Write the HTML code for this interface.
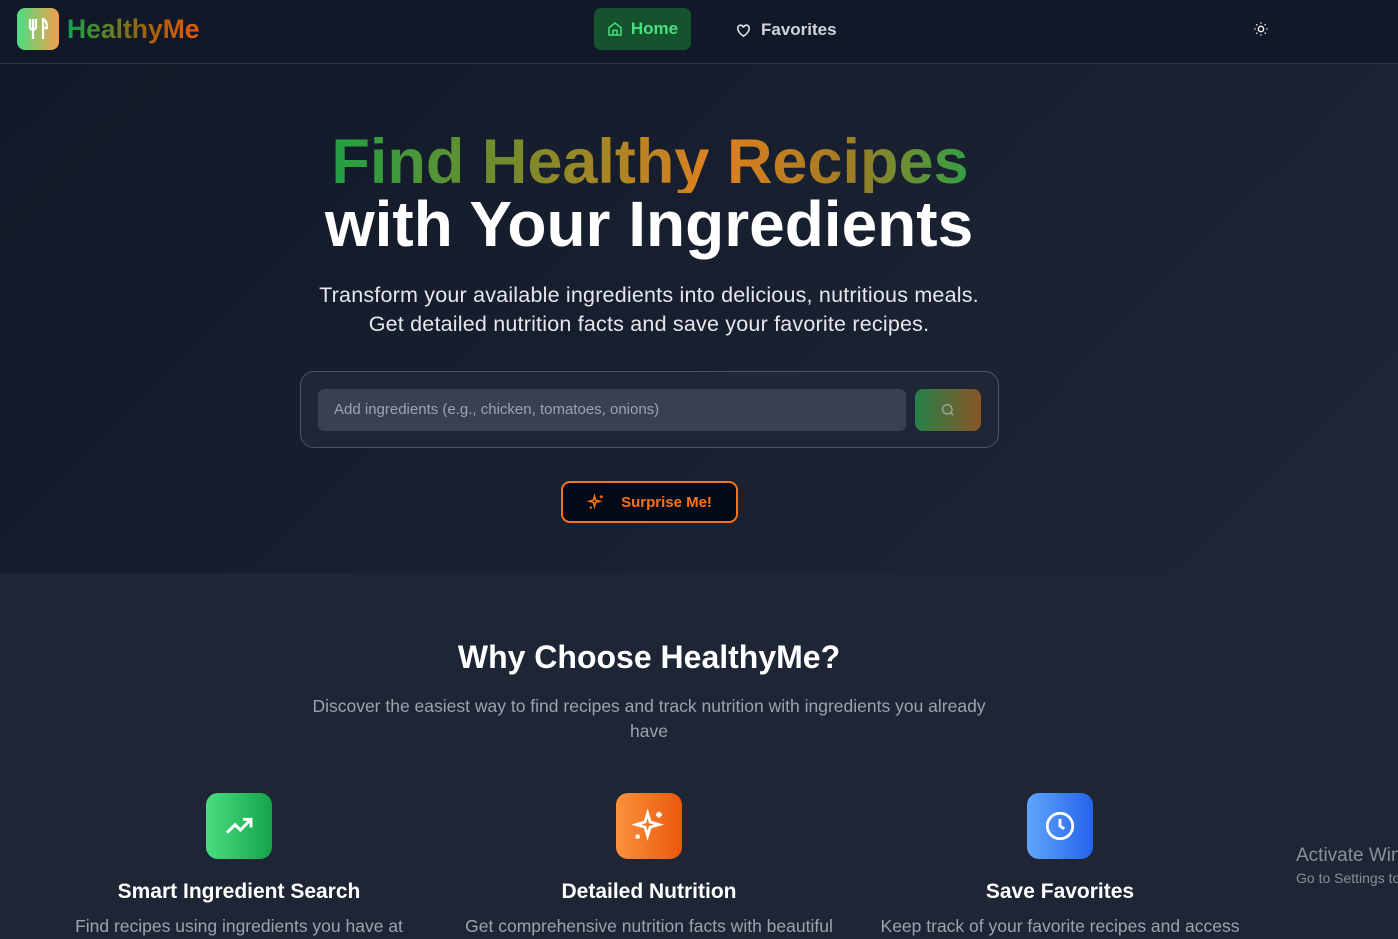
<!DOCTYPE html>
<html><head><meta charset="utf-8"><style>
*{margin:0;padding:0;box-sizing:border-box}
body{width:1398px;height:939px;overflow:hidden;background:#1e2535;font-family:"Liberation Sans",sans-serif;position:relative}
.nav{position:absolute;top:0;left:0;width:1398px;height:64px;background:#111827;border-bottom:1px solid #2d3646}
.logo{position:absolute;left:17px;top:8px;width:42px;height:42px;border-radius:8px;background:linear-gradient(90deg,#4ade80,#f59e4b)}
.brand{position:absolute;left:67px;top:14px;font-size:26.5px;font-weight:bold;background:linear-gradient(90deg,#16a34a,#a16207 60%,#ea580c);-webkit-background-clip:text;color:transparent}
.home{position:absolute;left:594px;top:8px;width:97px;height:42px;border-radius:7px;background:#14532d;color:#4ade80;font-weight:bold;font-size:17px;display:flex;align-items:center;justify-content:center;gap:8px}
.fav{position:absolute;left:735px;top:9px;height:42px;color:#d1d5db;font-weight:bold;font-size:17px;display:flex;align-items:center;gap:9px}
.hero{position:absolute;top:64px;left:0;width:1398px;height:509px;background:linear-gradient(135deg,#111827,#1b2333 70%,#1f2737)}
h1{position:absolute;left:0;width:1300px;text-align:center;font-size:63px;font-weight:bold;line-height:62px}
.l1{top:131px;background:linear-gradient(90deg,#22a045 0%,#7c8a2a 30%,#e0801f 60%,#a57b23 80%,#32a043 100%);-webkit-background-clip:text;color:transparent;width:640px;left:330px}
.l2{top:193px;color:#fff;left:0;width:1298px;font-size:64px}
.sub{position:absolute;top:281px;left:0;width:1298px;text-align:center;color:#e5e7eb;font-size:21.5px;line-height:29px;letter-spacing:0.2px}
.box{position:absolute;left:300px;top:371px;width:699px;height:77px;border:1px solid #4b5563;border-radius:14px;background:#1f2636}
.inp{position:absolute;left:17px;top:17px;width:588px;height:42px;border-radius:6px;background:#374151;color:#9ca3af;font-size:15px;line-height:42px;padding-left:16px}
.sb{position:absolute;left:614px;top:17px;width:66px;height:42px;border-radius:8px;background:linear-gradient(90deg,#25804a,#8b5525);display:flex;align-items:center;justify-content:center}
.sur{position:absolute;left:561px;top:481px;width:177px;height:42px;border:2px solid #f97316;border-radius:9px;background:#050a18;color:#f97316;font-weight:bold;font-size:15px;display:flex;align-items:center;justify-content:center;gap:16px}
h2{position:absolute;top:639px;left:0;width:1298px;text-align:center;color:#fff;font-size:32px}
.d{position:absolute;top:694px;left:300px;width:698px;text-align:center;color:#9ca3af;font-size:17.5px;line-height:25px}
.ic{position:absolute;top:793px;width:66px;height:66px;border-radius:12px;display:flex;align-items:center;justify-content:center}
.ft{position:absolute;top:880px;width:420px;text-align:center;color:#fff;font-size:21px;font-weight:bold}
.fd{position:absolute;top:916px;width:420px;text-align:center;color:#9ca3af;font-size:17.5px;white-space:nowrap}
.clip{position:absolute;left:1290px;top:840px;width:108px;height:60px;overflow:hidden}
.act{position:absolute;left:6px;top:5px;color:#8a8f98;font-size:19px;white-space:nowrap}
.act2{position:absolute;left:6px;top:30px;color:#8a8f98;font-size:14px;white-space:nowrap}
</style></head><body>
<div class="nav">
<div class="logo"><svg width="42" height="42" viewBox="0 0 42 42" fill="none" stroke="#fff" stroke-width="2.2"><path d="M13 11v8a3 3 0 0 0 6 0v-8M16 11v20M26 31V11c3 1 4 5 4 9h-4"/></svg></div>
<div class="brand">HealthyMe</div>
<div class="home"><svg width="16" height="16" viewBox="0 0 24 24" fill="none" stroke="#4ade80" stroke-width="2.2"><path d="M3 10l9-7 9 7v11H3z M9 21v-7h6v7"/></svg>Home</div>
<div class="fav"><svg width="17" height="17" viewBox="0 0 24 24" fill="none" stroke="#e5e7eb" stroke-width="2.2"><path d="M12 20s-8-5-8-11a4 4 0 0 1 8-1 4 4 0 0 1 8 1c0 6-8 11-8 11z"/></svg>Favorites</div>
<svg style="position:absolute;left:1253px;top:21px" width="16" height="16" viewBox="0 0 24 24" fill="none" stroke="#fff" stroke-width="2"><circle cx="12" cy="12" r="4"/><path d="M12 2v2M12 20v2M2 12h2M20 12h2M5 5l1.5 1.5M17.5 17.5L19 19M5 19l1.5-1.5M17.5 6.5L19 5"/></svg>
</div>
<div class="hero"></div>
<h1 class="l1">Find Healthy Recipes</h1>
<h1 class="l2">with Your Ingredients</h1>
<div class="sub">Transform your available ingredients into delicious, nutritious meals.<br>Get detailed nutrition facts and save your favorite recipes.</div>
<div class="box"><div class="inp">Add ingredients (e.g., chicken, tomatoes, onions)</div><div class="sb"><svg width="16" height="16" viewBox="0 0 24 24" fill="none" stroke="#a0a8a0" stroke-width="2"><circle cx="11" cy="11" r="7"/><path d="M20 20l-4-4"/></svg></div></div>
<div class="sur"><svg width="18" height="18" viewBox="0 0 24 24" fill="none" stroke="#f97316" stroke-width="2"><path d="M10 4l1.5 5.5L17 11l-5.5 1.5L10 18l-1.5-5.5L3 11l5.5-1.5z M19 3v4M17 5h4M5 18v3M3.5 19.5h3"/></svg>Surprise Me!</div>
<h2>Why Choose HealthyMe?</h2>
<div class="d">Discover the easiest way to find recipes and track nutrition with ingredients you already<br>have</div>
<div class="ic" style="left:206px;background:linear-gradient(90deg,#4ade80,#16a34a)"><svg width="32" height="32" viewBox="0 0 24 24" fill="none" stroke="#fff" stroke-width="2.2"><path d="M3 17l6-6 4 4 8-8M15 7h6v6"/></svg></div>
<div class="ic" style="left:616px;background:linear-gradient(90deg,#fb923c,#ea580c)"><svg width="34" height="34" viewBox="0 0 24 24" fill="none" stroke="#fff" stroke-width="2"><path d="M11 3l1.8 6.2L19 11l-6.2 1.8L11 19l-1.8-6.2L3 11l6.2-1.8z M19 2v4M17 4h4M4 18v3M2.5 19.5h3"/></svg></div>
<div class="ic" style="left:1027px;background:linear-gradient(90deg,#60a5fa,#2563eb)"><svg width="34" height="34" viewBox="0 0 24 24" fill="none" stroke="#fff" stroke-width="2"><circle cx="12" cy="12" r="9"/><path d="M12 7v5l3 2"/></svg></div>
<div class="ft" style="left:29px">Smart Ingredient Search</div>
<div class="ft" style="left:439px">Detailed Nutrition</div>
<div class="ft" style="left:850px">Save Favorites</div>
<div class="fd" style="left:29px">Find recipes using ingredients you have at</div>
<div class="fd" style="left:439px">Get comprehensive nutrition facts with beautiful</div>
<div class="fd" style="left:850px">Keep track of your favorite recipes and access</div>
<div class="clip"><div class="act">Activate Windows</div><div class="act2">Go to Settings to activate Windows.</div></div>
</body></html>
